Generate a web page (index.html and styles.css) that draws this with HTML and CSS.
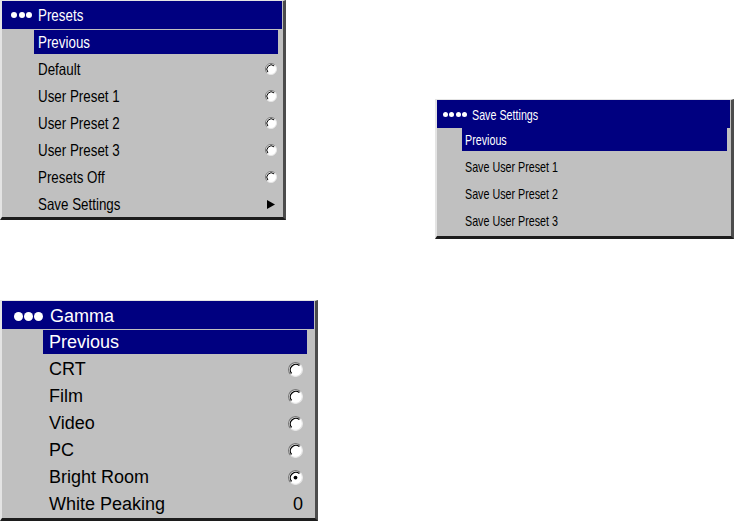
FILE: index.html
```html
<!DOCTYPE html>
<html>
<head>
<meta charset="utf-8">
<link rel="stylesheet" href="styles.css">
</head>
<body>
<div class="top">
  <div class="panel p1">
    <div class="title"><span class="dots"><i></i><i></i><i></i></span><span class="label">Presets</span></div>
    <ul class="items">
      <li class="item sel"><span class="label">Previous</span></li>
      <li class="item"><span class="label">Default</span><svg class="radio" viewBox="0 0 12 12"><circle cx="6" cy="6" r="5.5" fill="#fff"/><path d="M2.1 9.9A5.5 5.5 0 0 1 9.9 2.1" fill="none" stroke="#7a7a7a" stroke-width="1"/><path d="M2.9 9.1A4.4 4.4 0 0 1 9.1 2.9" fill="none" stroke="#000" stroke-width="1"/><path d="M9.9 2.1A5.5 5.5 0 0 1 2.1 9.9" fill="none" stroke="#e6e6e6" stroke-width="1"/></svg></li>
      <li class="item"><span class="label">User Preset 1</span><svg class="radio" viewBox="0 0 12 12"><circle cx="6" cy="6" r="5.5" fill="#fff"/><path d="M2.1 9.9A5.5 5.5 0 0 1 9.9 2.1" fill="none" stroke="#7a7a7a" stroke-width="1"/><path d="M2.9 9.1A4.4 4.4 0 0 1 9.1 2.9" fill="none" stroke="#000" stroke-width="1"/><path d="M9.9 2.1A5.5 5.5 0 0 1 2.1 9.9" fill="none" stroke="#e6e6e6" stroke-width="1"/></svg></li>
      <li class="item"><span class="label">User Preset 2</span><svg class="radio" viewBox="0 0 12 12"><circle cx="6" cy="6" r="5.5" fill="#fff"/><path d="M2.1 9.9A5.5 5.5 0 0 1 9.9 2.1" fill="none" stroke="#7a7a7a" stroke-width="1"/><path d="M2.9 9.1A4.4 4.4 0 0 1 9.1 2.9" fill="none" stroke="#000" stroke-width="1"/><path d="M9.9 2.1A5.5 5.5 0 0 1 2.1 9.9" fill="none" stroke="#e6e6e6" stroke-width="1"/></svg></li>
      <li class="item"><span class="label">User Preset 3</span><svg class="radio" viewBox="0 0 12 12"><circle cx="6" cy="6" r="5.5" fill="#fff"/><path d="M2.1 9.9A5.5 5.5 0 0 1 9.9 2.1" fill="none" stroke="#7a7a7a" stroke-width="1"/><path d="M2.9 9.1A4.4 4.4 0 0 1 9.1 2.9" fill="none" stroke="#000" stroke-width="1"/><path d="M9.9 2.1A5.5 5.5 0 0 1 2.1 9.9" fill="none" stroke="#e6e6e6" stroke-width="1"/></svg></li>
      <li class="item"><span class="label">Presets Off</span><svg class="radio" viewBox="0 0 12 12"><circle cx="6" cy="6" r="5.5" fill="#fff"/><path d="M2.1 9.9A5.5 5.5 0 0 1 9.9 2.1" fill="none" stroke="#7a7a7a" stroke-width="1"/><path d="M2.9 9.1A4.4 4.4 0 0 1 9.1 2.9" fill="none" stroke="#000" stroke-width="1"/><path d="M9.9 2.1A5.5 5.5 0 0 1 2.1 9.9" fill="none" stroke="#e6e6e6" stroke-width="1"/></svg></li>
      <li class="item"><span class="label">Save Settings</span><svg class="arrow" viewBox="0 0 8 9"><polygon points="0,0 8,4.5 0,9" fill="#000"/></svg></li>
    </ul>
  </div>
  <div class="panel p2">
    <div class="title"><span class="dots"><i></i><i></i><i></i><i></i></span><span class="label">Save Settings</span></div>
    <ul class="items">
      <li class="item sel"><span class="label">Previous</span></li>
      <li class="item"><span class="label">Save User Preset 1</span></li>
      <li class="item"><span class="label">Save User Preset 2</span></li>
      <li class="item"><span class="label">Save User Preset 3</span></li>
    </ul>
  </div>
</div>
<div class="panel p3">
  <div class="title"><span class="dots"><i></i><i></i><i></i></span><span class="label">Gamma</span></div>
  <ul class="items">
    <li class="item sel"><span class="label">Previous</span></li>
    <li class="item"><span class="label">CRT</span><svg class="radio" viewBox="0 0 12 12"><circle cx="6" cy="6" r="5.5" fill="#fff"/><path d="M2.1 9.9A5.5 5.5 0 0 1 9.9 2.1" fill="none" stroke="#7a7a7a" stroke-width="1"/><path d="M2.9 9.1A4.4 4.4 0 0 1 9.1 2.9" fill="none" stroke="#000" stroke-width="1"/><path d="M9.9 2.1A5.5 5.5 0 0 1 2.1 9.9" fill="none" stroke="#e6e6e6" stroke-width="1"/></svg></li>
    <li class="item"><span class="label">Film</span><svg class="radio" viewBox="0 0 12 12"><circle cx="6" cy="6" r="5.5" fill="#fff"/><path d="M2.1 9.9A5.5 5.5 0 0 1 9.9 2.1" fill="none" stroke="#7a7a7a" stroke-width="1"/><path d="M2.9 9.1A4.4 4.4 0 0 1 9.1 2.9" fill="none" stroke="#000" stroke-width="1"/><path d="M9.9 2.1A5.5 5.5 0 0 1 2.1 9.9" fill="none" stroke="#e6e6e6" stroke-width="1"/></svg></li>
    <li class="item"><span class="label">Video</span><svg class="radio" viewBox="0 0 12 12"><circle cx="6" cy="6" r="5.5" fill="#fff"/><path d="M2.1 9.9A5.5 5.5 0 0 1 9.9 2.1" fill="none" stroke="#7a7a7a" stroke-width="1"/><path d="M2.9 9.1A4.4 4.4 0 0 1 9.1 2.9" fill="none" stroke="#000" stroke-width="1"/><path d="M9.9 2.1A5.5 5.5 0 0 1 2.1 9.9" fill="none" stroke="#e6e6e6" stroke-width="1"/></svg></li>
    <li class="item"><span class="label">PC</span><svg class="radio" viewBox="0 0 12 12"><circle cx="6" cy="6" r="5.5" fill="#fff"/><path d="M2.1 9.9A5.5 5.5 0 0 1 9.9 2.1" fill="none" stroke="#7a7a7a" stroke-width="1"/><path d="M2.9 9.1A4.4 4.4 0 0 1 9.1 2.9" fill="none" stroke="#000" stroke-width="1"/><path d="M9.9 2.1A5.5 5.5 0 0 1 2.1 9.9" fill="none" stroke="#e6e6e6" stroke-width="1"/></svg></li>
    <li class="item"><span class="label">Bright Room</span><svg class="radio" viewBox="0 0 12 12"><circle cx="6" cy="6" r="5.5" fill="#fff"/><path d="M2.1 9.9A5.5 5.5 0 0 1 9.9 2.1" fill="none" stroke="#7a7a7a" stroke-width="1"/><path d="M2.9 9.1A4.4 4.4 0 0 1 9.1 2.9" fill="none" stroke="#000" stroke-width="1"/><path d="M9.9 2.1A5.5 5.5 0 0 1 2.1 9.9" fill="none" stroke="#e6e6e6" stroke-width="1"/><circle cx="6" cy="6" r="1.5" fill="#000"/></svg></li>
    <li class="item"><span class="label">White Peaking</span><span class="value">0</span></li>
  </ul>
</div>
</body>
</html>
```
FILE: styles.css
```css
body {
  margin: 0;
  background: #fff;
  font-family: "Liberation Sans", Arial, sans-serif;
}

.top {
  display: flex;
  align-items: flex-start;
  justify-content: space-between;
}

.panel {
  box-sizing: border-box;
  background: #c0c0c0;
  border-top: 1px solid #e4e4e4;
  border-left: 2px solid #e4e4e4;
  border-right: 3px solid #4c4c4c;
  border-bottom: 3px solid #1c1c1c;
}

.title {
  height: 28px;
  margin-right: 1px;
  background: #000080;
  color: #fff;
  display: flex;
  align-items: center;
}

.dots {
  display: flex;
  align-items: center;
}

.dots i {
  display: block;
  border-radius: 50%;
  background: #fff;
}

.items {
  list-style: none;
  margin: 0;
  display: flex;
  flex-direction: column;
}

.item {
  box-sizing: border-box;
  display: flex;
  align-items: center;
  justify-content: space-between;
  color: #000;
  white-space: nowrap;
}

.item.sel {
  background: #000080;
  color: #fff;
}

.radio {
  display: block;
  flex: none;
}

.arrow {
  display: block;
  flex: none;
  width: 8px;
  height: 9px;
  margin-right: 2px;
}

/* Presets panel (condensed face) */
.p1 {
  width: 286px;
  font-size: 16.5px;
}
.p1 .label {
  display: inline-block;
  transform: scaleX(0.81);
  transform-origin: left center;
}
.p1 .title {
  padding-left: 9px;
  gap: 6px;
}
.p1 .dots {
  gap: 1.5px;
}
.p1 .dots i {
  width: 6px;
  height: 6px;
}
.p1 .items {
  padding: 1px 5px 1px 32px;
  gap: 3px;
}
.p1 .item {
  height: 24px;
  padding: 0 1px 0 4px;
}
.p1 .radio {
  width: 12px;
  height: 12px;
}

/* Save Settings panel (condensed face) */
.p2 {
  width: 299px;
  margin-top: 99px;
  font-size: 15px;
}
.p2 .label {
  display: inline-block;
  transform: scaleX(0.715);
  transform-origin: left center;
}
.p2 .title {
  padding-left: 6px;
  gap: 5px;
}
.p2 .dots {
  gap: 1.3px;
}
.p2 .dots i {
  width: 5px;
  height: 5px;
}
.p2 .items {
  padding: 0 4px 4px 25px;
  gap: 4px;
}
.p2 .item {
  height: 23px;
  padding: 0 2px 0 3px;
}

/* Gamma panel */
.p3 {
  width: 318px;
  margin-top: 61px;
  font-size: 18px;
}
.p3 .title {
  padding-left: 12px;
  gap: 7px;
  padding-top: 2px;
  box-sizing: border-box;
}
.p3 .dots {
  gap: 1px;
}
.p3 .dots i {
  width: 9px;
  height: 9px;
}
.p3 .items {
  padding: 1px 8px 2px 41px;
  gap: 3px;
}
.p3 .item {
  height: 24px;
  padding: 0 4px 0 6px;
}
.p3 .radio {
  width: 15px;
  height: 15px;
}
.p3 .value {
  color: #000;
}
```
